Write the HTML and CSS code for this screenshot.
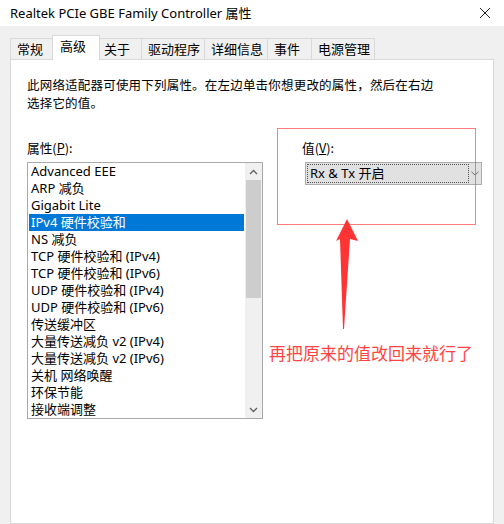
FILE: index.html
```html
<!DOCTYPE html>
<html lang="zh-CN">
<head>
<meta charset="utf-8">
<title>Realtek PCIe GBE Family Controller 属性</title>
<link rel="stylesheet" href="styles.css">
</head>
<body>
<div class="window">
  <div class="titlebar">
    <span class="title">Realtek PCIe GBE Family Controller 属性</span>
    <svg class="close" width="12" height="12" viewBox="0 0 12 12"><path d="M1 1 L11 11 M11 1 L1 11" stroke="#222" stroke-width="1" fill="none"/></svg>
  </div>
  <div class="body">
    <div class="tabs">
      <div class="tab">常规</div>
      <div class="tab active">高级</div>
      <div class="tab">关于</div>
      <div class="tab">驱动程序</div>
      <div class="tab">详细信息</div>
      <div class="tab">事件</div>
      <div class="tab">电源管理</div>
    </div>
    <div class="panel">
      <div class="desc">
        <div class="desc-line">此网络适配器可使用下列属性。在左边单击你想更改的属性，然后在右边</div>
        <div class="desc-line">选择它的值。</div>
      </div>
      <div class="cols">
        <div class="leftcol">
          <div class="label">属性(<u>P</u>):</div>
          <div class="listbox">
            <ul class="items">
              <li>Advanced EEE</li>
              <li>ARP 减负</li>
              <li>Gigabit Lite</li>
              <li class="sel">IPv4 硬件校验和</li>
              <li>NS 减负</li>
              <li>TCP 硬件校验和 (IPv4)</li>
              <li>TCP 硬件校验和 (IPv6)</li>
              <li>UDP 硬件校验和 (IPv4)</li>
              <li>UDP 硬件校验和 (IPv6)</li>
              <li>传送缓冲区</li>
              <li>大量传送减负 v2 (IPv4)</li>
              <li>大量传送减负 v2 (IPv6)</li>
              <li>关机 网络唤醒</li>
              <li>环保节能</li>
              <li>接收端调整</li>
            </ul>
            <div class="scrollbar">
              <div class="sbtn"><svg width="9" height="6" viewBox="0 0 9 6"><path d="M1 5 L4.5 1.5 L8 5" stroke="#606060" stroke-width="1.3" fill="none"/></svg></div>
              <div class="track"><div class="thumb"></div></div>
              <div class="sbtn"><svg width="9" height="6" viewBox="0 0 9 6"><path d="M1 1 L4.5 4.5 L8 1" stroke="#606060" stroke-width="1.3" fill="none"/></svg></div>
            </div>
          </div>
        </div>
        <div class="rightcol">
          <div class="label">值(<u>V</u>):</div>
          <div class="combo">
            <div class="combo-text">Rx &amp; Tx 开启</div>
            <div class="combo-arrow"><svg width="8" height="5" viewBox="0 0 8 5"><path d="M0.5 0.8 L4 4 L7.5 0.8" stroke="#707070" stroke-width="1" fill="none"/></svg></div>
          </div>
        </div>
      </div>
    </div>
  </div>
  <div class="note-box"></div>
  <svg class="note-arrow" width="30" height="115" viewBox="0 0 30 115"><polygon points="11,0 22,22 14,20 8,110 7,110 4,20 0,22" fill="#ff3535"/></svg>
  <div class="note-text">再把原来的值改回来就行了</div>
</div>
</body>
</html>
```
FILE: styles.css
```css
html, body {
  margin: 0;
  padding: 0;
}
body {
  width: 504px;
  height: 524px;
  overflow: hidden;
  background: #f0f0f0;
  font-family: "Noto Sans", "Noto Sans CJK SC", sans-serif;
  color: #000;
}
.window {
  position: relative;
  width: 504px;
  height: 524px;
}
.titlebar {
  height: 26px;
  background: #fff;
  display: flex;
  align-items: center;
  justify-content: space-between;
  padding: 0 12px 0 10px;
}
.title {
  font-size: 13px;
  line-height: 16px;
  color: #000;
}
.close {
  display: block;
  margin-right: 1px;
}
.body {
  padding: 0 10px;
}
.tabs {
  display: flex;
  align-items: flex-end;
  height: 33px;
  position: relative;
  z-index: 2;
}
.tab {
  box-sizing: border-box;
  min-width: 45px;
  height: 21px;
  padding: 0 4px 0 6px;
  border: 1px solid #d9d9d9;
  border-bottom: none;
  margin-left: -1px;
  background: #f0f0f0;
  font-family: "Noto Sans CJK SC", sans-serif;
  font-size: 13px;
  line-height: 19px;
  white-space: nowrap;
}
.tab:first-child {
  margin-left: 0;
}
.tab.active {
  background: #fff;
  height: 25px;
  min-width: 48px;
  margin: 0 -2px -1px -3px;
  padding-left: 7px;
  line-height: 20px;
  position: relative;
  z-index: 3;
}
.panel {
  box-sizing: border-box;
  height: 465px;
  background: #fff;
  border: 1px solid #d9d9d9;
  padding: 16px 0 0 16px;
}
.desc {
  font-family: "Noto Sans CJK SC", sans-serif;
  font-size: 12.5px;
}
.desc-line {
  height: 18px;
  line-height: 18px;
  letter-spacing: 0.2px;
  white-space: nowrap;
}
.cols {
  display: flex;
  margin-top: 28px;
}
.label {
  font-family: "Noto Sans CJK SC", sans-serif;
  font-size: 12.7px;
  line-height: 16px;
  height: 16px;
}
.label u {
  text-underline-offset: 1px;
}
.leftcol {
  width: 236px;
}
.listbox {
  box-sizing: border-box;
  margin-top: 6px;
  width: 236px;
  height: 257px;
  border: 1px solid #a9a9a9;
  display: flex;
}
.items {
  list-style: none;
  margin: 0;
  padding: 0;
  flex: 1;
}
.items li {
  height: 17px;
  line-height: 17px;
  margin: 0 1px;
  padding-left: 2px;
  font-size: 13px;
  white-space: nowrap;
  overflow: hidden;
}
.items li.sel {
  background: #0078d7;
  color: #fff;
}
.scrollbar {
  width: 17px;
  background: #f0f0f0;
  display: flex;
  flex-direction: column;
}
.sbtn {
  height: 17px;
  display: flex;
  align-items: center;
  justify-content: center;
}
.track {
  flex: 1;
}
.thumb {
  height: 118px;
  margin: 0 1px;
  background: #cdcdcd;
}
.rightcol {
  margin-left: 39px;
}
.combo {
  box-sizing: border-box;
  margin: 6px 0 0 3px;
  width: 177px;
  height: 23px;
  background: #e1e1e1;
  border: 1px solid #adadad;
  display: flex;
  align-items: center;
  padding: 1px;
}
.combo-text {
  box-sizing: border-box;
  width: 162px;
  height: 19px;
  border: 1px dotted #555;
  padding-left: 2px;
  font-size: 13px;
  line-height: 17px;
  white-space: nowrap;
}
.combo-arrow {
  flex: 1;
  display: flex;
  align-items: center;
  justify-content: center;
}
.note-box {
  position: absolute;
  left: 277px;
  top: 128px;
  width: 197px;
  height: 95px;
  border: 1px solid rgba(255, 80, 80, 0.75);
}
.note-arrow {
  position: absolute;
  left: 336px;
  top: 219px;
}
.note-text {
  position: absolute;
  left: 269px;
  top: 341px;
  font-family: "Noto Sans CJK SC", sans-serif;
  font-size: 17px;
  line-height: 24px;
  color: #ff4444;
  white-space: nowrap;
}
```
